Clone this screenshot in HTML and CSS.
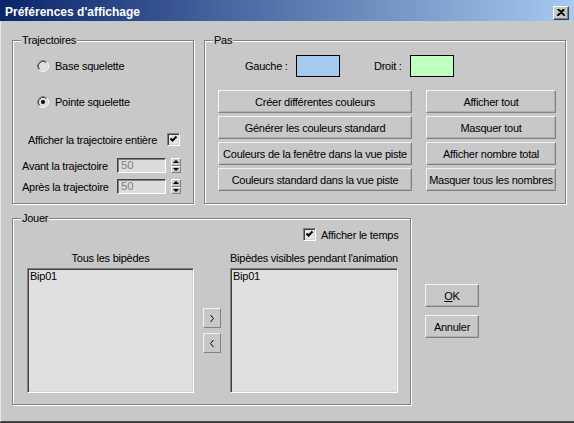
FILE: index.html
```html
<!DOCTYPE html>
<html lang="fr">
<head>
<meta charset="utf-8">
<title>Préférences d'affichage</title>
<link rel="stylesheet" href="styles.css">
</head>
<body>
<div class="window">
  <div class="titlebar">
    <span class="title">Préférences d'affichage</span>
    <button class="close" aria-label="Fermer">
      <svg width="8" height="7" viewBox="0 0 8 7"><path d="M0.5 0 L7.5 7 M1.5 0 L8 6.5 M0 6.5 L6.5 0 M1 7 L7.5 0.5" stroke="#000" stroke-width="1.1" fill="none"/></svg>
    </button>
  </div>
  <div class="content">
    <div class="top-row">
      <div class="group traj">
        <span class="legend">Trajectoires</span>
        <div class="radio-row r1">
          <svg class="radio" width="12" height="12" viewBox="0 0 12 12">
            <circle cx="6" cy="6" r="5" fill="#e0e0e0"/>
            <path d="M2.11 9.89 A5.5 5.5 0 0 1 9.89 2.11" stroke="#808080" fill="none"/>
            <path d="M9.89 2.11 A5.5 5.5 0 0 1 2.11 9.89" stroke="#fff" fill="none"/>
            <path d="M2.82 9.18 A4.5 4.5 0 0 1 9.18 2.82" stroke="#404040" fill="none"/>
            <path d="M9.18 2.82 A4.5 4.5 0 0 1 2.82 9.18" stroke="#d8d8d8" fill="none"/>
          </svg>
          <span>Base squelette</span>
        </div>
        <div class="radio-row r2">
          <svg class="radio" width="12" height="12" viewBox="0 0 12 12">
            <circle cx="6" cy="6" r="5" fill="#e0e0e0"/>
            <path d="M2.11 9.89 A5.5 5.5 0 0 1 9.89 2.11" stroke="#808080" fill="none"/>
            <path d="M9.89 2.11 A5.5 5.5 0 0 1 2.11 9.89" stroke="#fff" fill="none"/>
            <path d="M2.82 9.18 A4.5 4.5 0 0 1 9.18 2.82" stroke="#404040" fill="none"/>
            <path d="M9.18 2.82 A4.5 4.5 0 0 1 2.82 9.18" stroke="#d8d8d8" fill="none"/>
            <circle cx="6" cy="6" r="2" fill="#000"/>
          </svg>
          <span>Pointe squelette</span>
        </div>
        <div class="check-row full">
          <span>Afficher la trajectoire entière</span>
          <span class="checkbox"><svg width="9" height="9" viewBox="0 0 9 9"><path d="M1.5 3.5 L3.5 5.5 L7.5 1.5" stroke="#000" stroke-width="2" fill="none"/></svg></span>
        </div>
        <div class="spin-row avant">
          <span class="spin-label">Avant la trajectoire</span>
          <span class="field">50</span>
          <span class="spinner"><span class="up"></span><span class="down"></span></span>
        </div>
        <div class="spin-row apres">
          <span class="spin-label">Après la trajectoire</span>
          <span class="field">50</span>
          <span class="spinner"><span class="up"></span><span class="down"></span></span>
        </div>
      </div>
      <div class="group pas">
        <span class="legend">Pas</span>
        <div class="colors">
          <span class="lbl-g">Gauche :</span>
          <span class="swatch blue"></span>
          <span class="lbl-d">Droit :</span>
          <span class="swatch green"></span>
        </div>
        <div class="btn-grid">
          <button class="btn">Créer différentes couleurs</button>
          <button class="btn">Afficher tout</button>
          <button class="btn">Générer les couleurs standard</button>
          <button class="btn">Masquer tout</button>
          <button class="btn">Couleurs de la fenêtre dans la vue piste</button>
          <button class="btn">Afficher nombre total</button>
          <button class="btn">Couleurs standard dans la vue piste</button>
          <button class="btn">Masquer tous les nombres</button>
        </div>
      </div>
    </div>
    <div class="bottom-row">
      <div class="group jouer">
        <span class="legend">Jouer</span>
        <div class="check-row temps">
          <span class="checkbox"><svg width="9" height="9" viewBox="0 0 9 9"><path d="M1.5 3.5 L3.5 5.5 L7.5 1.5" stroke="#000" stroke-width="2" fill="none"/></svg></span>
          <span>Afficher le temps</span>
        </div>
        <div class="lists">
          <span class="list-label">Tous les bipèdes</span>
          <span></span>
          <span class="list-label">Bipèdes visibles pendant l'animation</span>
          <div class="listbox"><div class="item">Bip01</div></div>
          <div class="arrows">
            <button class="arrow" aria-label="Ajouter"><svg width="4" height="7" viewBox="0 0 4 7"><path d="M0.5 0 L3.5 3.5 L0.5 7" stroke="#000" fill="none"/></svg></button>
            <button class="arrow" aria-label="Retirer"><svg width="4" height="7" viewBox="0 0 4 7"><path d="M3.5 0 L0.5 3.5 L3.5 7" stroke="#000" fill="none"/></svg></button>
          </div>
          <div class="listbox"><div class="item">Bip01</div></div>
        </div>
      </div>
      <div class="dialog-btns">
        <button class="btn"><u>O</u>K</button>
        <button class="btn">Annuler</button>
      </div>
    </div>
  </div>
</div>
</body>
</html>
```

FILE: styles.css
```css
* { box-sizing: border-box; }
body {
  margin: 0;
  background: #303030;
  font-family: "Liberation Sans", Arial, sans-serif;
  font-size: 11px;
  letter-spacing: -0.25px;
  color: #000;
}
.window {
  width: 574px;
  height: 422px;
  background: #c8c8c8;
  border-left: 1px solid #e6e6e6;
  border-bottom: 1px solid #505050;
  display: flex;
  flex-direction: column;
}
.titlebar {
  height: 21px;
  margin-left: -1px;
  padding: 2px 5px 0 5px;
  background: linear-gradient(to right, #0a246a, #a6caf0);
  display: flex;
  align-items: center;
  justify-content: space-between;
}
.title {
  color: #fff;
  font-weight: bold;
  font-size: 12px;
  line-height: 14px;
  letter-spacing: 0;
}
.close {
  width: 16px;
  height: 14px;
  padding: 0;
  margin-top: 2px;
  background: #c8c8c8;
  border: 1px solid;
  border-color: #fff #404040 #404040 #fff;
  box-shadow: inset -1px -1px 0 #808080;
  display: flex;
  align-items: center;
  justify-content: center;
}
.content {
  padding: 19px 0 0 11px;
}
.top-row { display: flex; gap: 10px; }
.group {
  position: relative;
  border: 1px solid #808080;
  box-shadow: inset 1px 1px 0 #fff, 1px 1px 0 #fff;
  display: flex;
  flex-direction: column;
}
.legend {
  position: absolute;
  top: -7px;
  left: 8px;
  padding: 0 1px;
  line-height: 13px;
  background: #c8c8c8;
}
.traj { width: 182px; height: 164px; }
.pas { width: 362px; height: 164px; }

.radio-row {
  display: flex;
  align-items: center;
  gap: 6px;
  height: 13px;
  padding-left: 24px;
}
.r1 { margin-top: 18px; }
.r2 { margin-top: 23px; }
.check-row {
  display: flex;
  align-items: center;
  height: 13px;
}
.full {
  margin-top: 25px;
  padding: 0 13px 0 15px;
  justify-content: space-between;
}
.checkbox {
  width: 13px;
  height: 13px;
  flex: none;
  background: #e4e4e4;
  border: 1px solid;
  border-color: #808080 #fff #fff #808080;
  box-shadow: inset 1px 1px 0 #404040, inset -1px -1px 0 #d4d4d4;
  display: flex;
  align-items: center;
  justify-content: center;
}
.spin-row {
  display: flex;
  align-items: center;
  height: 15px;
  padding-left: 9px;
}
.avant { margin-top: 12px; }
.apres { margin-top: 6px; }
.spin-label { width: 95px; }
.field {
  width: 49px;
  height: 15px;
  padding: 0 3px;
  line-height: 13px;
  color: #808080;
  font-size: 11.5px;
  background: #dcdcdc;
  border: 1px solid;
  border-color: #404040 #fff #fff #404040;
  box-shadow: inset 1px 1px 0 #808080;
}
.spinner {
  width: 10px;
  height: 15px;
  margin-left: 5px;
  display: flex;
  flex-direction: column;
}
.spinner span {
  flex: 1;
  border: 1px solid;
  border-color: #fff #808080 #808080 #fff;
  display: flex;
  align-items: center;
  justify-content: center;
}
.spinner .up::after {
  content: "";
  border-left: 3px solid transparent;
  border-right: 3px solid transparent;
  border-bottom: 3px solid #000;
}
.spinner .down::after {
  content: "";
  border-left: 3px solid transparent;
  border-right: 3px solid transparent;
  border-top: 3px solid #000;
}

.colors {
  display: flex;
  align-items: center;
  margin-top: 14px;
  padding-left: 40px;
  height: 22px;
}
.lbl-g { width: 51px; }
.lbl-d { width: 36px; margin-left: 34px; }
.swatch {
  width: 44px;
  height: 22px;
  border: 1px solid #000;
}
.blue { background: #a6caf0; }
.green { background: #c0ffc0; }
.btn-grid {
  margin-top: 13px;
  padding-left: 13px;
  display: grid;
  grid-template-columns: 194px 130px;
  grid-auto-rows: 23px;
  column-gap: 14px;
  row-gap: 3px;
}
.btn {
  font: inherit;
  letter-spacing: inherit;
  white-space: nowrap;
  color: #000;
  padding: 0;
  background: #c8c8c8;
  border: 1px solid;
  border-color: #f4f4f4 #808080 #808080 #f4f4f4;
  box-shadow: inset -1px -1px 0 #b0b0b0;
}

.bottom-row { display: flex; margin-top: 14px; }
.jouer { width: 399px; height: 187px; }
.temps {
  margin-top: 9px;
  padding-left: 290px;
  gap: 5px;
}
.lists {
  margin-top: 11px;
  padding-left: 14px;
  display: grid;
  grid-template-columns: 167px 18px 168px;
  grid-template-rows: 13px 125px;
  column-gap: 9px;
  row-gap: 3px;
}
.list-label {
  text-align: center;
  line-height: 13px;
  white-space: nowrap;
}
.listbox {
  background: #e0e0e0;
  border: 1px solid;
  border-color: #808080 #fff #fff #808080;
  box-shadow: inset 1px 1px 0 #404040, inset -1px -1px 0 #d4d4d4;
  padding: 1px 2px;
}
.item { line-height: 13px; }
.arrows {
  display: flex;
  flex-direction: column;
  gap: 5px;
  padding-top: 40px;
}
.arrow {
  width: 18px;
  height: 20px;
  padding: 0;
  background: #c8c8c8;
  border: 1px solid;
  border-color: #f4f4f4 #808080 #808080 #f4f4f4;
  display: flex;
  align-items: center;
  justify-content: center;
}
.dialog-btns {
  margin-left: 14px;
  padding-top: 66px;
  display: flex;
  flex-direction: column;
  gap: 8px;
}
.dialog-btns .btn { width: 54px; height: 23px; }
```
